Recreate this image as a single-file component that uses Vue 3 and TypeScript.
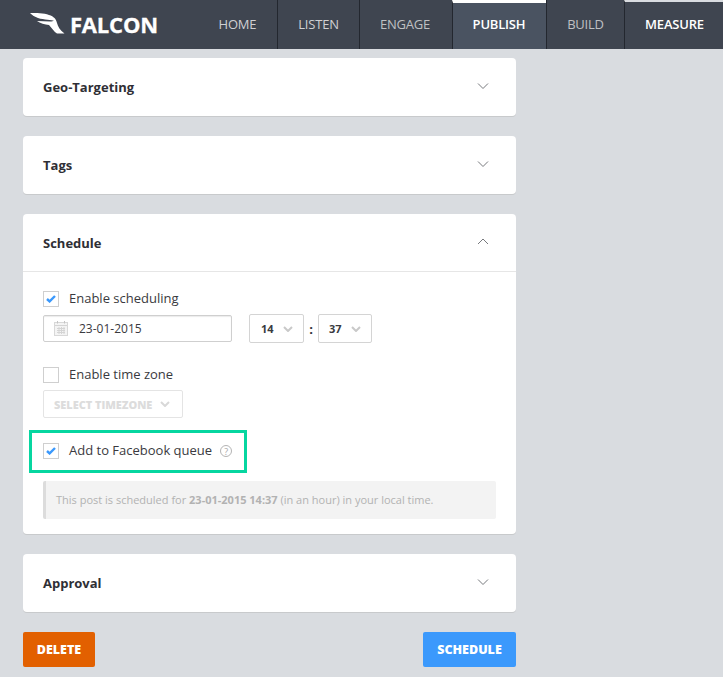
<script setup lang="ts">
const tabs = [
  { label: 'HOME', cls: 'w-home' },
  { label: 'LISTEN', cls: 'w-listen' },
  { label: 'ENGAGE', cls: 'w-engage dim' },
  { label: 'PUBLISH', cls: 'w-publish active' },
  { label: 'BUILD', cls: 'w-build dim' },
  { label: 'MEASURE', cls: 'w-measure hover' },
]
</script>

<template>
  <div class="page">
    <header class="nav">
      <div class="logo">
        <svg class="wing" width="35" height="21" viewBox="0 0 35 21">
          <path fill="#fff" d="M0 0 C6 0 14 0 19 2 C24 3.5 26 6 27 10 C28 14 30 17 34.5 20.5 L27 20.5 C24 19 22 15 19 12 C15 11.5 10 10.5 7 8 L20 8.5 C22 8.5 23 8 24 8 C22 6.5 14 7 8 5 C5 4 2 2 0 0 Z" />
        </svg>
        <span class="logo-text">FALCON</span>
      </div>
      <nav class="tabs">
        <a v-for="t in tabs" :key="t.label" class="tab" :class="t.cls">{{ t.label }}</a>
      </nav>
    </header>

    <main class="content">
      <section class="card">
        <div class="card-head">
          <h3>Geo-Targeting</h3>
          <svg class="chev" width="12" height="7" viewBox="0 0 12 7"><path d="M1 0.5 L6 5.5 L11 0.5" /></svg>
        </div>
      </section>

      <section class="card">
        <div class="card-head">
          <h3>Tags</h3>
          <svg class="chev" width="12" height="7" viewBox="0 0 12 7"><path d="M1 0.5 L6 5.5 L11 0.5" /></svg>
        </div>
      </section>

      <section class="card">
        <div class="card-head open">
          <h3>Schedule</h3>
          <svg class="chev" width="12" height="7" viewBox="0 0 12 7"><path d="M1 6 L6 1 L11 6" /></svg>
        </div>
        <div class="card-body">
          <label class="check first">
            <span class="box">
              <svg width="10" height="8" viewBox="0 0 10 8"><path d="M1 4 L3.6 6.4 L9 1" /></svg>
            </span>
            <span class="lbl">Enable scheduling</span>
          </label>
          <div class="when">
            <div class="date">
              <svg class="cal" width="14" height="15" viewBox="0 0 14 15">
                <rect x="0.5" y="1.5" width="13" height="13" fill="#f4f4f4" stroke="#d8d8d8" />
                <path d="M1 4.5 H13 M3 7.5 H11 M3 9.5 H11 M3 11.5 H11 M5 6 V13 M7.5 6 V13 M10 6 V13" stroke="#d4d4d4" fill="none" />
                <path d="M3.5 0 V2.5 M10.5 0 V2.5" stroke="#c4c4c4" fill="none" />
              </svg>
              <span>23-01-2015</span>
            </div>
            <div class="sel hour">
              <b>14</b>
              <svg width="10" height="6" viewBox="0 0 10 6"><path d="M1 1 L5 5 L9 1" /></svg>
            </div>
            <span class="colon">:</span>
            <div class="sel minute">
              <b>37</b>
              <svg width="10" height="6" viewBox="0 0 10 6"><path d="M1 1 L5 5 L9 1" /></svg>
            </div>
          </div>

          <label class="check tz">
            <span class="box"></span>
            <span class="lbl">Enable time zone</span>
          </label>
          <div class="sel zone">
            <b>SELECT TIMEZONE</b>
            <svg width="10" height="6" viewBox="0 0 10 6"><path d="M1 1 L5 5 L9 1" /></svg>
          </div>

          <div class="queue">
            <label class="check">
              <span class="box">
                <svg width="10" height="8" viewBox="0 0 10 8"><path d="M1 4 L3.6 6.4 L9 1" /></svg>
              </span>
              <span class="lbl">Add to Facebook queue</span>
            </label>
            <span class="help">?</span>
          </div>

          <p class="note">This post is scheduled for <b>23-01-2015 14:37</b> (in an hour) in your local time.</p>
        </div>
      </section>

      <section class="card">
        <div class="card-head">
          <h3>Approval</h3>
          <svg class="chev" width="12" height="7" viewBox="0 0 12 7"><path d="M1 0.5 L6 5.5 L11 0.5" /></svg>
        </div>
      </section>

      <div class="actions">
        <button class="btn delete">DELETE</button>
        <button class="btn schedule">SCHEDULE</button>
      </div>
    </main>
  </div>
</template>

<style>
html, body {
  margin: 0;
  background: #d9dce0;
}
</style>

<style scoped>
.page {
  width: 723px;
  height: 677px;
  overflow: hidden;
  background: #d9dce0;
  font-family: "Open Sans", "Liberation Sans", sans-serif;
  color: #2f2f35;
}
.nav {
  height: 49px;
  display: flex;
  justify-content: space-between;
  background: #3f4550;
}
.logo {
  display: flex;
  align-items: center;
  padding: 0 0 1px 30px;
}
.wing {
  margin-top: -1px;
}
.logo-text {
  margin-left: 5px;
  font-size: 22px;
  font-weight: 700;
  letter-spacing: -0.2px;
  color: #fff;
  -webkit-text-stroke: 0.3px #fff;
}
.tabs {
  display: flex;
}
.tab {
  box-sizing: border-box;
  display: flex;
  align-items: center;
  justify-content: center;
  padding-bottom: 2px;
  border-left: 1px solid #23272f;
  font-size: 13px;
  font-weight: 400;
  letter-spacing: -0.2px;
  color: #cfd0d3;
}
.w-home { width: 79px; border-left: 0; }
.w-listen { width: 82px; }
.w-engage { width: 93px; padding-right: 2px; }
.w-publish { width: 94px; }
.w-build { width: 78px; }
.w-measure { width: 99px; padding-left: 1px; }
.dim {
  color: #bfc0c3;
}
.active {
  background: #4a5361;
  border-top: 3px solid #fff;
  padding-bottom: 5px;
  padding-right: 1px;
  color: #fff;
  font-weight: 600;
}
.hover {
  border-top: 2px solid #d9dce0;
  padding-bottom: 4px;
  color: #fff;
  font-weight: 600;
}
.content {
  width: 493px;
  margin-left: 23px;
  padding-top: 9px;
  display: flex;
  flex-direction: column;
  gap: 20px;
}
.card {
  background: #fff;
  border-radius: 4px;
  box-shadow: 0 1px 0 #c8cacc;
}
.card-head {
  box-sizing: border-box;
  height: 58px;
  padding: 0 27px 0 20px;
  display: flex;
  align-items: center;
  justify-content: space-between;
}
.card-head.open {
  border-bottom: 1px solid #e6e6e6;
}
.card-head h3 {
  margin: 0;
  font-size: 13px;
  font-weight: 700;
  color: #2f2f35;
}
.chev {
  margin-top: -2px;
  fill: none;
  stroke: #77797d;
  stroke-width: 1;
}
.card-body {
  padding: 19px 20px 15px;
}
.check {
  display: flex;
  align-items: center;
  gap: 10px;
  height: 16px;
  font-size: 13px;
  color: #3a3a40;
}
.lbl {
  margin-top: -2px;
}
.box {
  box-sizing: border-box;
  width: 16px;
  height: 16px;
  flex: none;
  display: flex;
  align-items: center;
  justify-content: center;
  border: 1px solid #cfcfcf;
  background: #fff;
}
.box svg {
  fill: none;
  stroke: #3b99fc;
  stroke-width: 2.4;
}
.when {
  display: flex;
  align-items: center;
  margin-top: 7px;
}
.date {
  box-sizing: border-box;
  width: 189px;
  height: 27px;
  display: flex;
  align-items: center;
  gap: 11px;
  padding: 0 0 1px 10px;
  border: 1px solid #cfcfcf;
  border-radius: 2px;
  box-shadow: inset 0 1px 1px #ececec;
  font-size: 12px;
  color: #3a3a40;
}
.cal {
  flex: none;
}
.sel {
  box-sizing: border-box;
  height: 29px;
  display: flex;
  align-items: center;
  justify-content: space-between;
  border: 1px solid #d4d4d4;
  border-radius: 2px;
  font-size: 11px;
  color: #3a3a40;
}
.sel svg {
  fill: none;
  stroke: #c9c9c9;
  stroke-width: 2;
}
.hour {
  width: 55px;
  margin-left: 17px;
  padding: 0 10px 0 11px;
}
.minute {
  width: 54px;
  padding: 0 10px 0 10px;
}
.colon {
  width: 14px;
  text-align: center;
  font-size: 13px;
  font-weight: 700;
}
.tz {
  margin-top: 24px;
}
.zone {
  width: 140px;
  height: 28px;
  margin-top: 7px;
  padding: 0 12px 0 10px;
  border-color: #e4e4e4;
  font-size: 11px;
  color: #dcdcdc;
}
.zone b {
  font-weight: 800;
  letter-spacing: -0.05px;
}
.zone svg {
  stroke: #d8d8d8;
}
.queue {
  box-sizing: border-box;
  width: 218px;
  height: 43px;
  margin: 12px 0 0 -14px;
  padding: 0 0 1px 11px;
  display: flex;
  align-items: center;
  gap: 8px;
  border: 3px solid #06d6a0;
}
.help {
  box-sizing: border-box;
  width: 12px;
  height: 12px;
  display: flex;
  align-items: center;
  justify-content: center;
  border: 1px solid #b4b4b4;
  border-radius: 50%;
  font-size: 9px;
  color: #a8a8a8;
}
.note {
  box-sizing: border-box;
  height: 38px;
  margin: 8px 0 0;
  padding: 0 0 2px 10px;
  display: flex;
  align-items: center;
  white-space: pre-wrap;
  background: #f3f3f3;
  border-left: 3px solid #dcdcdc;
  border-radius: 2px;
  font-size: 11px;
  color: #b2b2b2;
}
.note b {
  font-weight: 700;
}
.actions {
  display: flex;
  justify-content: space-between;
}
.btn {
  height: 35px;
  border: 0;
  border-radius: 2px;
  padding: 0;
  font-family: inherit;
  font-size: 12.5px;
  font-weight: 800;
  color: #fff;
}
.delete {
  width: 72px;
  background: #e26000;
}
.schedule {
  width: 93px;
  background: #3b99fc;
}
</style>
